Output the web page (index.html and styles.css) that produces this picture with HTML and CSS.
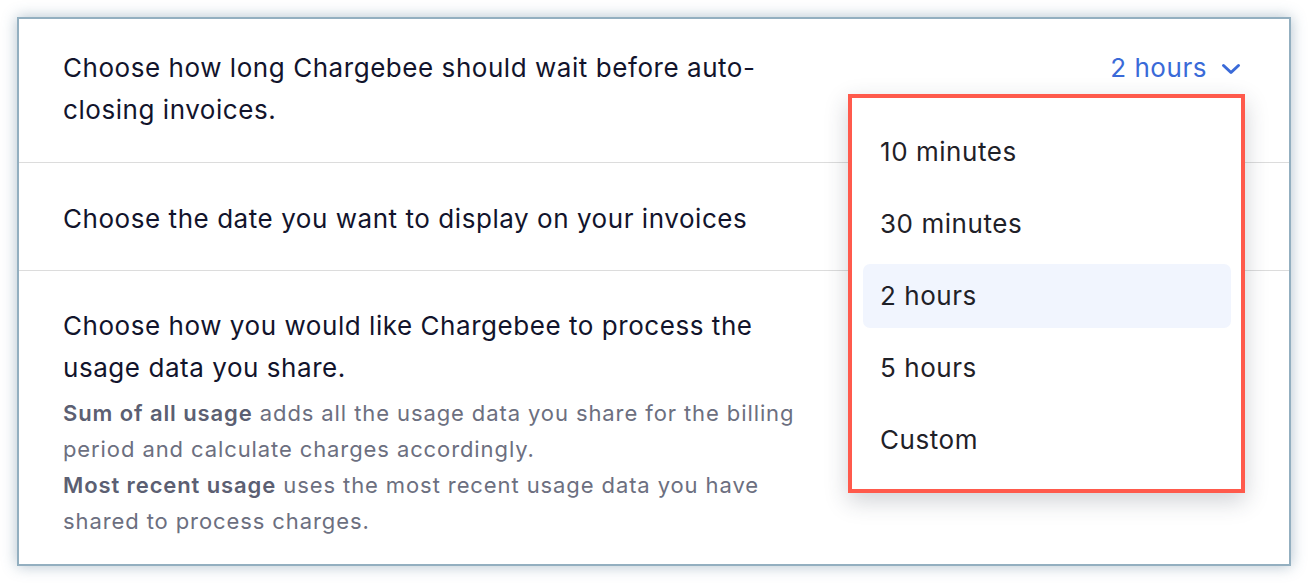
FILE: index.html
```html
<!DOCTYPE html>
<html>
<head>
<meta charset="utf-8">
<link rel="stylesheet" href="styles.css">
</head>
<body>
<div class="page">
  <div class="card">
    <div class="row row-first">
      <div class="label">Choose how long Chargebee should wait before auto-<br>closing invoices.</div>
      <div class="trigger">
        <span>2 hours</span>
        <svg class="chev" width="20" height="14" viewBox="0 0 20 14"><path d="M2.5 3.5 L10 10.5 L17.5 3.5" fill="none" stroke="#3a6ad8" stroke-width="3" stroke-linecap="round" stroke-linejoin="round"/></svg>
      </div>
    </div>
    <div class="row row-second">
      <div class="label">Choose the date you want to display on your invoices</div>
    </div>
    <div class="row row-third">
      <div class="label">Choose how you would like Chargebee to process the<br>usage data you share.</div>
      <div class="help">
        <p><b>Sum of all usage</b> adds all the usage data you share for the billing<br>period and calculate charges accordingly.</p>
        <p><b>Most recent usage</b> uses the most recent usage data you have<br>shared to process charges.</p>
      </div>
    </div>
    <div class="menu">
      <div class="item">10 minutes</div>
      <div class="item">30 minutes</div>
      <div class="item active">2 hours</div>
      <div class="item">5 hours</div>
      <div class="item">Custom</div>
    </div>
  </div>
</div>
</body>
</html>
```

FILE: styles.css
```css
html, body {
  margin: 0;
  padding: 0;
  background: #ffffff;
}
body {
  font-family: "Inter", "Noto Sans", sans-serif;
  color: #12142c;
}
.page {
  padding: 17px 18px 18px 17px;
}
.card {
  position: relative;
  border: 2px solid #93afc0;
  background: #ffffff;
  box-shadow: 0 0 14px rgba(60, 100, 130, 0.4);
  height: 549px;
  box-sizing: border-box;
}
.row {
  display: flex;
  justify-content: space-between;
  align-items: flex-start;
  padding: 0 48px 0 44px;
  border-bottom: 1px solid #dcdcdc;
}
.row-first {
  padding-top: 28px;
  padding-bottom: 31px;
}
.row-second {
  padding-top: 35px;
  padding-bottom: 30px;
}
.row-third {
  display: block;
  padding-top: 34px;
  border-bottom: none;
}
.label {
  font-size: 26px;
  letter-spacing: 0.55px;
  line-height: 42px;
  color: #12142c;
}
.help {
  margin-top: 6px;
  font-size: 22px;
  letter-spacing: 0.9px;
  line-height: 36px;
  color: #6c6f80;
}
.help p {
  margin: 0;
}
.help b {
  font-weight: 600;
  color: #5c5f72;
}
.trigger {
  display: flex;
  align-items: center;
  gap: 14px;
  font-size: 26px;
  letter-spacing: 0.55px;
  line-height: 42px;
  color: #3a6ad8;
}
.chev {
  display: block;
  margin-top: 1px;
}
.menu {
  position: absolute;
  left: 829px;
  top: 75px;
  width: 397px;
  height: 399px;
  box-sizing: border-box;
  border: 4px solid #ff5a4c;
  background: #ffffff;
  box-shadow: 0 8px 22px rgba(40, 50, 70, 0.22);
  padding: 22px 10px 0 11px;
  display: flex;
  flex-direction: column;
  gap: 8px;
}
.item {
  height: 64px;
  line-height: 64px;
  padding-left: 17px;
  font-size: 26px;
  letter-spacing: 0.55px;
  color: #1f2128;
  border-radius: 7px;
}
.item.active {
  background: #f1f5fe;
}
```
